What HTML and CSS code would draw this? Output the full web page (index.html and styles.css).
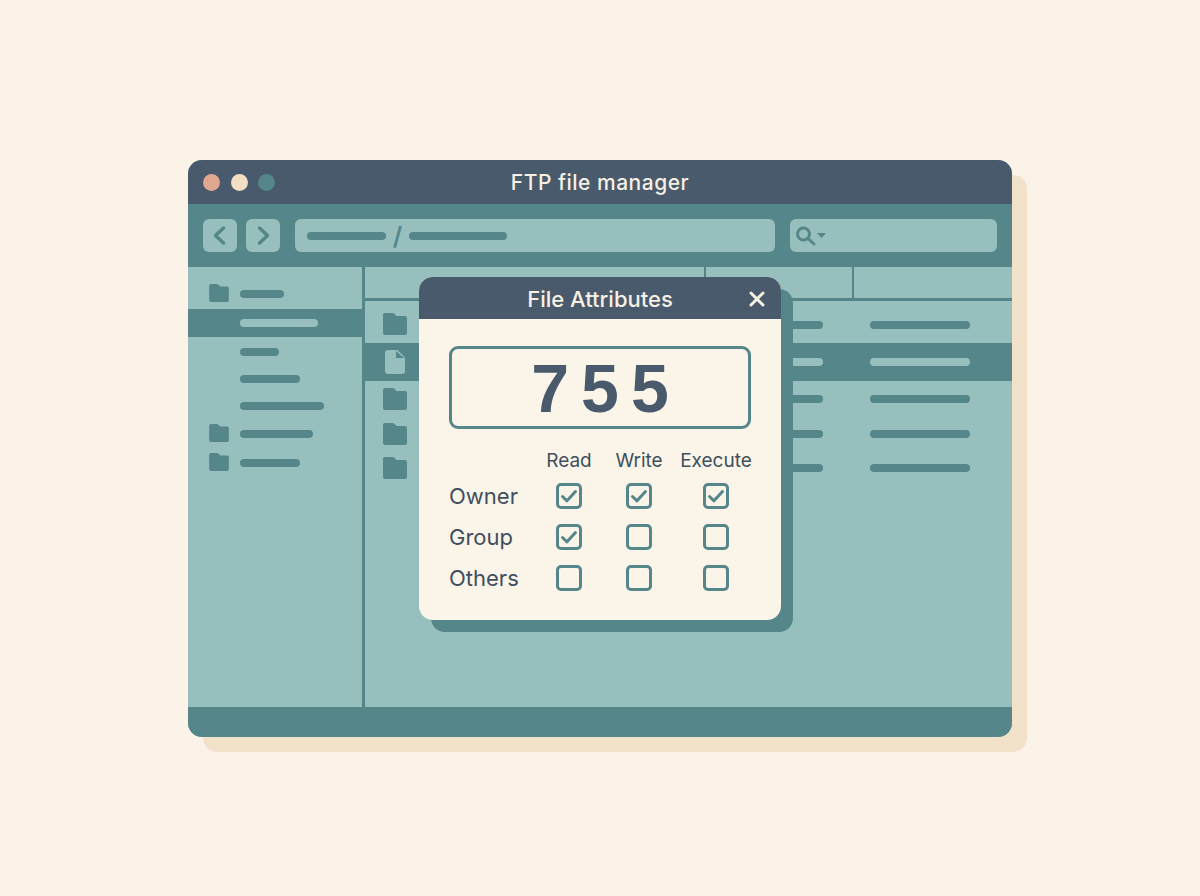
FILE: index.html

```html
<!DOCTYPE html>
<html lang="en">
<head>
    <meta charset="UTF-8">
    <meta name="viewport" content="width=device-width, initial-scale=1.0">
    <title>FTP file manager</title>
    <link rel="stylesheet" href="styles.css">
</head>
<body>

<svg class="sprites" width="0" height="0">
    <symbol id="folder" viewBox="0 0 24 22">
        <path d="M2 0h7.500c.8 0 1.300.3 1.800.8L13.500 3H22a2 2 0 0 1 2 2v15a2 2 0 0 1-2 2H2a2 2 0 0 1-2-2V2a2 2 0 0 1 2-2z"/>
    </symbol>
    <symbol id="check" viewBox="0 0 26 26">
        <path d="M6.500 13.500l4.500 4.300L19.500 8.500" fill="none" stroke-width="3" stroke-linecap="round" stroke-linejoin="round"/>
    </symbol>
</svg>

<div class="window">
    <div class="titlebar">
        <div class="dots">
            <span class="dot dot-red"></span>
            <span class="dot dot-cream"></span>
            <span class="dot dot-teal"></span>
        </div>
        <span class="window-title">FTP file manager</span>
    </div>

    <div class="toolbar">
        <button class="nav-btn">
            <svg width="34" height="33" viewBox="0 0 34 33"><path d="M20.500 9l-8 7.500 8 7.500"/></svg>
        </button>
        <button class="nav-btn">
            <svg width="34" height="33" viewBox="0 0 34 33"><path d="M13.500 9l8 7.500-8 7.500"/></svg>
        </button>
        <div class="path-box">
            <span class="bar bar-path1"></span>
            <span class="path-sep">/</span>
            <span class="bar bar-path2"></span>
        </div>
        <div class="search-box">
            <svg width="34" height="24" viewBox="0 0 34 24"><circle cx="9.500" cy="10" r="6"/><path d="M14 14.500l6 5.500"/><path class="caret" d="M23 9h9l-4.500 5z"/></svg>
        </div>
    </div>

    <div class="content">
        <div class="sidebar">
            <div class="nav-row">
                <svg class="folder-small"><use href="#folder"/></svg>
                <span class="bar bar-44"></span>
            </div>
            <div class="nav-row nav-selected"><span class="bar bar-78 bar-light"></span></div>
            <div class="nav-row"><span class="bar bar-39"></span></div>
            <div class="nav-row"><span class="bar bar-60"></span></div>
            <div class="nav-row"><span class="bar bar-84"></span></div>
            <div class="nav-row">
                <svg class="folder-small"><use href="#folder"/></svg>
                <span class="bar bar-73"></span>
            </div>
            <div class="nav-row">
                <svg class="folder-small"><use href="#folder"/></svg>
                <span class="bar bar-60"></span>
            </div>
        </div>

        <div class="main">
            <div class="list-head">
                <div class="head-cell head-name"></div>
                <div class="head-cell head-size"></div>
                <div class="head-cell"></div>
            </div>
            <div class="file-list">
                <div class="file-row row-first">
                    <svg class="folder-big"><use href="#folder"/></svg>
                    <span class="bar bar-date"></span>
                    <span class="bar bar-100"></span>
                </div>
                <div class="file-row row-selected">
                    <svg class="file-icon" width="20" height="24" viewBox="0 0 20 24">
                        <path d="M3 0h9.500L20 7.500V21a3 3 0 0 1-3 3H3a3 3 0 0 1-3-3V3a3 3 0 0 1 3-3z" fill="#97bfbd"/>
                        <path d="M11 1v7h8z" fill="#558689"/>
                    </svg>
                    <span class="bar bar-date bar-light"></span>
                    <span class="bar bar-100 bar-light"></span>
                </div>
                <div class="file-row">
                    <svg class="folder-big"><use href="#folder"/></svg>
                    <span class="bar bar-date"></span>
                    <span class="bar bar-100"></span>
                </div>
                <div class="file-row">
                    <svg class="folder-big"><use href="#folder"/></svg>
                    <span class="bar bar-date"></span>
                    <span class="bar bar-100"></span>
                </div>
                <div class="file-row">
                    <svg class="folder-big"><use href="#folder"/></svg>
                    <span class="bar bar-date"></span>
                    <span class="bar bar-100"></span>
                </div>
            </div>
        </div>
    </div>

    <div class="statusbar"></div>

    <!-- Attributes dialog sits over the file list -->
    <div class="dialog">
        <div class="dialog-head">
            <span class="dialog-title">File Attributes</span>
            <svg class="close-icon" width="16" height="16" viewBox="0 0 16 16"><path d="M2 2l12 12M14 2L2 14"/></svg>
        </div>
        <div class="dialog-body">
            <div class="mode-box">755</div>
            <div class="perm-grid">
                <span></span>
                <span class="perm-head">Read</span>
                <span class="perm-head">Write</span>
                <span class="perm-head">Execute</span>

                <span class="perm-label">Owner</span>
                <span class="checkbox"><svg><use href="#check"/></svg></span>
                <span class="checkbox"><svg><use href="#check"/></svg></span>
                <span class="checkbox"><svg><use href="#check"/></svg></span>

                <span class="perm-label">Group</span>
                <span class="checkbox"><svg><use href="#check"/></svg></span>
                <span class="checkbox"></span>
                <span class="checkbox"></span>

                <span class="perm-label">Others</span>
                <span class="checkbox"></span>
                <span class="checkbox"></span>
                <span class="checkbox"></span>
            </div>
        </div>
    </div>
</div>

</body>
</html>
```

FILE: styles.css

```css
/* Page */
body {
    font-family: Inter, "Noto Sans", sans-serif;
    background: #fbf3e7;
    color: #3f4f5e;
    margin: 0;
    height: 896px;
    display: flex;
    justify-content: center;
    padding-top: 160px;
    box-sizing: border-box;
    overflow: hidden;
}

.sprites {
    position: absolute;
}

/* Window */
.window {
    position: relative;
    width: 824px;
    height: 577px;
    border-radius: 14px;
    background: #97bfbd;
    box-shadow: 15px 15px 0 #f2e2c9;
    display: flex;
    flex-direction: column;
}

.titlebar {
    height: 44px;
    flex: none;
    background: #485a6b;
    border-radius: 14px 14px 0 0;
    display: flex;
    align-items: center;
    justify-content: center;
    position: relative;
}

.dots {
    position: absolute;
    left: 15px;
    top: 14px;
    display: flex;
    gap: 10.500px;
}

.dot {
    width: 17px;
    height: 17px;
    border-radius: 50%;
}

.dot-red { background: #dfa78f; }
.dot-cream { background: #f3dfc3; }
.dot-teal { background: #558689; }

.window-title {
    color: #f7f0e3;
    font-size: 21px;
    font-weight: 500;
    letter-spacing: 0.500px;
}

/* Toolbar */
.toolbar {
    height: 63px;
    flex: none;
    background: #558689;
    display: flex;
    align-items: center;
    padding: 0 15px;
    box-sizing: border-box;
}

.nav-btn {
    width: 34px;
    height: 33px;
    padding: 0;
    margin: 0 9px 0 0;
    border: none;
    border-radius: 6px;
    background: #97bfbd;
    display: flex;
}

.nav-btn path {
    fill: none;
    stroke: #558689;
    stroke-width: 3.500;
    stroke-linecap: round;
    stroke-linejoin: round;
}

.path-box {
    width: 481px;
    height: 33px;
    margin-left: 6px;
    background: #97bfbd;
    border-radius: 6px;
    display: flex;
    align-items: center;
    padding-left: 12px;
    box-sizing: border-box;
}

.path-sep {
    width: 23px;
    text-align: center;
    color: #558689;
    font-size: 25px;
    font-weight: 600;
    line-height: 24px;
}

.search-box {
    width: 207px;
    height: 33px;
    margin-left: 15px;
    background: #97bfbd;
    border-radius: 6px;
    display: flex;
    align-items: center;
    padding-left: 4px;
    box-sizing: border-box;
}

.search-box circle,
.search-box path {
    fill: none;
    stroke: #558689;
    stroke-width: 3;
    stroke-linecap: round;
}

.search-box .caret {
    fill: #558689;
    stroke: none;
}

/* Placeholder text bars */
.bar {
    display: block;
    height: 8px;
    border-radius: 4px;
    background: #558689;
    flex: none;
}

.bar-light { background: #97bfbd; }
.bar-path1 { width: 79px; }
.bar-path2 { width: 98px; }
.bar-39 { width: 39px; }
.bar-44 { width: 44px; }
.bar-60 { width: 60px; }
.bar-73 { width: 73px; }
.bar-78 { width: 78px; }
.bar-84 { width: 84px; }
.bar-100 { width: 100px; }

/* Content */
.content {
    flex: 1;
    display: flex;
    min-height: 0;
}

.sidebar {
    width: 177px;
    flex: none;
    box-sizing: border-box;
    padding-top: 12px;
    display: grid;
    grid-template-rows: 30px 28px 30px 24px 30px 26px 32px;
    align-content: start;
    border-right: 3px solid #558689;
}

.nav-row {
    position: relative;
    display: flex;
    align-items: center;
    padding-left: 52px;
}

.nav-selected {
    background: #558689;
}

.folder-small {
    position: absolute;
    left: 21px;
    top: 50%;
    margin-top: -10px;
    width: 20px;
    height: 18px;
    fill: #558689;
}

.main {
    flex: 1;
    min-width: 0;
    overflow: hidden;
}

.list-head {
    height: 34px;
    box-sizing: border-box;
    border-bottom: 3px solid #558689;
    display: flex;
}

.head-cell {
    flex: 1;
    border-right: 2px solid #558689;
}

.head-cell:last-child {
    border-right: none;
}

.head-name { flex: none; width: 339px; }
.head-size { flex: none; width: 146px; }

.file-list {
    display: grid;
    grid-template-rows: 42px 38px 36px 34px 34px;
}

.file-row {
    position: relative;
    display: flex;
    align-items: center;
    box-sizing: border-box;
}

.file-row .bar-date {
    position: absolute;
    left: 378px;
    width: 80px;
}

.file-row .bar-100 {
    position: absolute;
    left: 505px;
}

.row-first {
    padding-top: 5px;
}

.row-selected {
    background: #558689;
}

.folder-big {
    position: absolute;
    left: 18px;
    top: 50%;
    margin-top: -11px;
    width: 24px;
    height: 22px;
    fill: #558689;
}

.row-first .folder-big {
    margin-top: -9px;
}

.file-icon {
    position: absolute;
    left: 20px;
    top: 7px;
}

.statusbar {
    height: 30px;
    flex: none;
    background: #558689;
    border-radius: 0 0 14px 14px;
}

/* Dialog */
.dialog {
    position: absolute;
    left: 231px;
    top: 117px;
    width: 362px;
    height: 343px;
    background: #fbf5e9;
    border-radius: 14px;
    box-shadow: 12px 12px 0 #558689;
}

.dialog-head {
    height: 42px;
    background: #485a6b;
    border-radius: 14px 14px 0 0;
    display: flex;
    align-items: center;
    justify-content: center;
    position: relative;
}

.dialog-title {
    color: #f7f0e3;
    font-size: 22px;
    font-weight: 500;
    margin-top: 1px;
}

.close-icon {
    position: absolute;
    right: 16px;
    top: 14px;
}

.close-icon path {
    fill: none;
    stroke: #f7f0e3;
    stroke-width: 3;
    stroke-linecap: round;
}

.dialog-body {
    padding: 27px 0 0 30px;
}

.mode-box {
    width: 302px;
    height: 83px;
    box-sizing: border-box;
    border: 3px solid #558689;
    border-radius: 9px;
    display: flex;
    align-items: center;
    justify-content: center;
    color: #485a6b;
    font-family: "Liberation Sans", sans-serif;
    font-size: 68px;
    font-weight: 700;
    letter-spacing: 12px;
    padding-left: 12px;
}

.perm-grid {
    display: grid;
    grid-template-columns: 85px 70px 70px 84px;
    grid-template-rows: 34px 41px 41px 41px;
    margin-top: 12px;
    align-items: center;
    justify-items: center;
}

.perm-head {
    font-size: 19px;
    white-space: nowrap;
    margin-top: 4px;
}

.perm-label {
    font-size: 22px;
    justify-self: start;
}

.checkbox {
    width: 26px;
    height: 26px;
    box-sizing: border-box;
    border: 3px solid #558689;
    border-radius: 5px;
    display: block;
    position: relative;
}

.checkbox svg {
    position: absolute;
    left: -3px;
    top: -3px;
    width: 26px;
    height: 26px;
    stroke: #558689;
}
```
